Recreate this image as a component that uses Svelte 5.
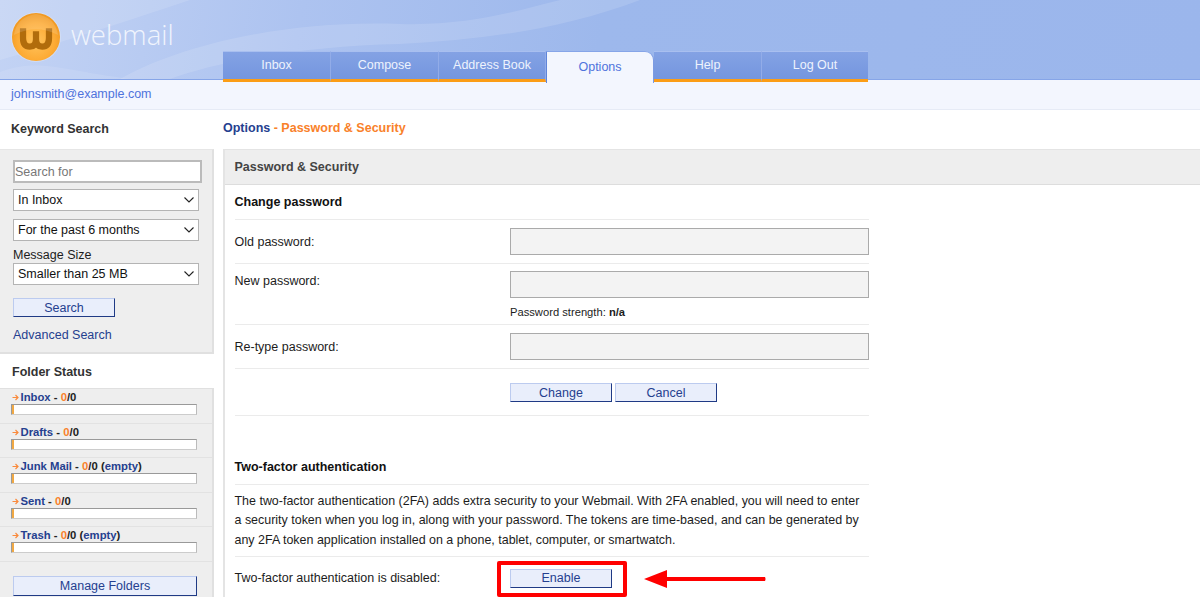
<script>
  const tabs = [
    { label: 'Inbox' },
    { label: 'Compose' },
    { label: 'Address Book' },
    { label: 'Options', active: true },
    { label: 'Help' },
    { label: 'Log Out' }
  ];

  const folders = [
    { name: 'Inbox' },
    { name: 'Drafts' },
    { name: 'Junk Mail', empty: true },
    { name: 'Sent' },
    { name: 'Trash', empty: true }
  ];
</script>

<div class="page">
  <header class="top">
    <svg class="swirl" viewBox="0 0 1200 79" preserveAspectRatio="none" aria-hidden="true">
      <path d="M0 60 C70 40 130 20 190 0 L0 0 Z" fill="#fff" opacity="0.12" />
      <path d="M120 79 C190 40 300 20 400 24 C470 26 520 10 560 0 L640 0 C560 30 480 40 400 44 C310 46 220 60 170 79 Z" fill="#fff" opacity="0.13" />
      <path d="M0 72 C40 58 60 70 130 79 L0 79 Z" fill="#fff" opacity="0.1" />
    </svg>
    <div class="logo">
      <svg class="badge" viewBox="0 0 52 52" aria-hidden="true">
        <defs>
          <radialGradient id="orb" cx="50%" cy="60%" r="55%">
            <stop offset="0%" stop-color="#ffc35c" />
            <stop offset="70%" stop-color="#fdab35" />
            <stop offset="100%" stop-color="#f19a23" />
          </radialGradient>
        </defs>
        <circle cx="26" cy="26" r="26" fill="#dfe8fa" opacity="0.5" />
        <circle cx="26" cy="26" r="25" fill="url(#orb)" />
        <path d="M12.5 17 V27 Q12.5 36 19.5 36 Q26 36 26 28 V20 V28 Q26 36 32.5 36 Q39.5 36 39.5 27 V17" fill="none" stroke="#b16c0c" stroke-width="6.5" />
        <path d="M3 24 Q26 12 49 24 Q46 5 26 2 Q6 5 3 24 Z" fill="#fff" opacity="0.14" />
      </svg>
      <span class="wordmark">webmail</span>
    </div>
    <nav class="tabs">
      {#each tabs as tab}
        <a class="tab" class:active={tab.active} href="#/">{tab.label}</a>
      {/each}
    </nav>
  </header>

  <div class="userbar"><a href="#/">johnsmith@example.com</a></div>

  <div class="columns">
    <aside class="side">
      <h2 class="side-title">Keyword Search</h2>
      <form class="search-panel">
        <input class="search-input" type="text" placeholder="Search for" />
        <select class="sel sel-a"><option>In Inbox</option></select>
        <select class="sel sel-b"><option>For the past 6 months</option></select>
        <label class="size-label" for="size">Message Size</label>
        <select class="sel" id="size"><option>Smaller than 25 MB</option></select>
        <button class="btn search-btn" type="button">Search</button>
        <a class="advanced" href="#/">Advanced Search</a>
      </form>

      <h2 class="side-title folder-title">Folder Status</h2>
      <div class="folder-panel">
        {#each folders as folder}
          <div class="folder">
            <div class="folder-line">
              <svg class="arrow-mini" viewBox="0 0 7 7" aria-hidden="true">
                <path d="M0.5 3.5 H5.5 M3.5 1 L6 3.5 L3.5 6" fill="none" stroke="#f98a3c" stroke-width="1.2" />
              </svg><a href="#/">{folder.name}</a> - <span class="count">0</span>/0{#if folder.empty}&nbsp;(<a href="#/">empty</a>){/if}
            </div>
            <div class="meter"><span class="meter-fill"></span></div>
          </div>
        {/each}
        <div class="manage"><button class="btn manage-btn" type="button">Manage Folders</button></div>
      </div>
    </aside>

    <main class="main">
      <div class="crumbs"><a href="#/">Options</a> <span>- Password &amp; Security</span></div>
      <section class="panel">
        <h1 class="panel-head">Password &amp; Security</h1>
        <div class="body">
          <h3 class="sec-head">Change password</h3>
          <div class="row row-old">
            <label for="old">Old password:</label>
            <input id="old" class="pw" type="password" />
          </div>
          <div class="row row-new">
            <label for="new">New password:</label>
            <div>
              <input id="new" class="pw" type="password" />
              <p class="strength">Password strength: <b>n/a</b></p>
            </div>
          </div>
          <div class="row row-retype">
            <label for="re">Re-type password:</label>
            <input id="re" class="pw" type="password" />
          </div>
          <div class="row row-actions">
            <span></span>
            <div class="actions">
              <button class="btn form-btn" type="button">Change</button>
              <button class="btn form-btn" type="button">Cancel</button>
            </div>
          </div>

          <h3 class="sec-head two-fa">Two-factor authentication</h3>
          <p class="blurb">The two-factor authentication (2FA) adds extra security to your Webmail. With 2FA enabled, you will need to enter a security token when you log in, along with your password. The tokens are time-based, and can be generated by any 2FA token application installed on a phone, tablet, computer, or smartwatch.</p>
          <div class="row row-enable">
            <span>Two-factor authentication is disabled:</span>
            <button class="btn form-btn" type="button">Enable</button>
            <div class="callout"></div>
            <svg class="callout-arrow" viewBox="0 0 124 20" aria-hidden="true">
              <path d="M1 10 L24 1 V8 H122 Q123 10 122 12 H24 V19 Z" fill="#f00" />
            </svg>
          </div>
        </div>
      </section>
    </main>
  </div>
</div>

<style>
  :global(html), :global(body) {
    margin: 0;
    height: 100%;
    overflow: hidden;
    background: #fff;
  }

  .page {
    font: 12.5px/15px "Liberation Sans", Arial, sans-serif;
    color: #1c1c1c;
    height: 597px;
    overflow: hidden;
  }

  a {
    color: #25408f;
    text-decoration: none;
  }

  h1, h2, h3, p {
    margin: 0;
  }

  /* header */
  .top {
    position: relative;
    box-sizing: border-box;
    height: 80px;
    display: flex;
    background: linear-gradient(100deg, #c3d3f4 0, #adc3f0 25%, #9db8ec 50%, #9bb6ec 100%);
    border-bottom: 1px solid #86a5e8;
  }

  .swirl {
    position: absolute;
    inset: 0;
    width: 100%;
    height: 100%;
  }

  .logo {
    position: relative;
    width: 223px;
    flex: none;
    display: flex;
    align-items: flex-start;
    padding: 12px 0 0 11px;
    box-sizing: border-box;
    gap: 10px;
  }

  .badge {
    width: 50px;
    height: 50px;
    flex: none;
  }

  .wordmark {
    font: 300 27.5px/1 "Open Sans", sans-serif;
    color: #f0f4fd;
    margin-top: 9px;
  }

  .tabs {
    position: relative;
    display: flex;
    margin-top: 51px;
    height: 31px;
  }

  .tab {
    box-sizing: border-box;
    width: 108px;
    height: 31px;
    padding-top: 6px;
    text-align: center;
    color: #eef3fd;
    background: linear-gradient(#84a2e4, #7496df);
    border-top: 1px solid #a9bfef;
    border-right: 1px solid #92ace8;
    border-bottom: 3px solid #fb9d16;
  }

  .tab:nth-child(3) {
    width: 107px;
  }

  .tab:nth-child(6) {
    border-right: 0;
    width: 106px;
  }

  .tab.active {
    width: 108px;
    padding-top: 8px;
    color: #4f73dc;
    background: #f3f6fe;
    border: 0;
    border-top: 1px solid #86a5e8;
    border-left: 1px solid #5f85d9;
    border-right: 1px solid #7c9be3;
    border-radius: 0 9px 0 0;
    height: 32px;
  }

  .userbar {
    box-sizing: border-box;
    height: 30px;
    padding: 7px 11px 0;
    background: #f3f6fe;
    border-bottom: 1px solid #e6ebf6;
  }

  .userbar a {
    color: #4f73dc;
  }

  /* columns */
  .columns {
    display: flex;
    align-items: flex-start;
  }

  .side {
    width: 214px;
    flex: none;
    margin-right: 9px;
  }

  .side-title {
    font-size: 12.5px;
    font-weight: bold;
    color: #333;
    padding: 12px 0 0 11px;
    height: 27px;
  }

  .search-panel {
    box-sizing: border-box;
    height: 205px;
    padding: 10px 0 0 13px;
    background: #eee;
    border-top: 1px solid #e6e6e6;
    border-right: 2px solid #e0e0e0;
    border-bottom: 2px solid #e0e0e0;
    display: flex;
    flex-direction: column;
    align-items: flex-start;
  }

  .search-input {
    box-sizing: border-box;
    width: 189px;
    height: 23px;
    margin: 0;
    padding: 0;
    font: 12.5px "Liberation Sans", Arial, sans-serif;
    border: 2px solid #bbb;
    background: #fff;
    border-radius: 0;
    outline: none;
  }

  .search-input::placeholder {
    color: #777;
    opacity: 1;
  }

  .sel {
    box-sizing: border-box;
    width: 186px;
    height: 22px;
    margin: 0;
    padding: 0 0 0 4px;
    font: 12.5px "Liberation Sans", Arial, sans-serif;
    color: #111;
    appearance: none;
    background: #fff url("data:image/svg+xml,%3Csvg xmlns='http://www.w3.org/2000/svg' width='10' height='6'%3E%3Cpath d='M.5.5l4.5 4.5 4.500-4.500' fill='none' stroke='%23222' stroke-width='1.100'/%3E%3C/svg%3E") no-repeat right 4px center;
    border: 1px solid #b4b4b4;
    border-radius: 0;
  }

  .sel-a {
    margin-top: 6px;
  }

  .sel-b {
    margin-top: 8px;
  }

  .size-label {
    margin-top: 7px;
    height: 15px;
  }

  .btn {
    box-sizing: border-box;
    margin: 0;
    padding: 0;
    font: 12.5px "Liberation Sans", Arial, sans-serif;
    color: #25408f;
    background: #e9eefb;
    border: 1px solid;
    border-color: #bccbef #1f3a85 #1f3a85 #bccbef;
    border-radius: 0;
  }

  .search-btn {
    width: 102px;
    height: 19px;
    margin-top: 13px;
  }

  .advanced {
    margin-top: 11px;
  }

  .folder-title {
    padding-left: 12px;
    padding-top: 11px;
    height: 23px;
  }

  .folder-panel {
    background: #eee;
    border-top: 1px solid #e0e0e0;
    border-right: 2px solid #e0e0e0;
    height: 230px;
  }

  .folder {
    box-sizing: border-box;
    height: 34.6px;
    padding: 1px 0 0 11px;
    border-bottom: 1px solid #e2e2e2;
  }

  .folder-line {
    font-size: 11.3px;
    font-weight: bold;
    line-height: 14px;
    color: #222;
    white-space: nowrap;
  }

  .arrow-mini {
    display: inline-block;
    width: 7px;
    height: 7px;
    margin: 0 1.500px 0 1px;
  }

  .count {
    color: #f9812a;
  }

  .meter {
    box-sizing: border-box;
    width: 186px;
    height: 11px;
    background: #fff;
    border: 1px solid;
    border-color: #999 #bbb #ccc #999;
    display: flex;
  }

  .meter-fill {
    width: 2px;
    background: #f0a844;
  }

  .manage {
    padding: 14.500px 0 0 13px;
  }

  .manage-btn {
    width: 184px;
    height: 20px;
  }

  /* main */
  .main {
    flex: 1;
    min-width: 0;
  }

  .crumbs {
    font-weight: bold;
    height: 39px;
    box-sizing: border-box;
    padding-top: 11px;
    color: #f9812a;
  }

  .crumbs span {
    color: #f9812a;
  }

  .panel {
    border-left: 2px solid #e4e4e4;
    border-top: 1px solid #e4e4e4;
  }

  .panel-head {
    box-sizing: border-box;
    height: 35px;
    padding: 10px 0 0 9.500px;
    font-size: 12.5px;
    font-weight: bold;
    color: #444;
    background: #eee;
    border-bottom: 1px solid #ddd;
  }

  .body {
    width: 634.500px;
    margin-left: 9.500px;
  }

  .sec-head {
    box-sizing: border-box;
    height: 35px;
    padding-top: 10px;
    font-size: 12.5px;
    font-weight: bold;
    color: #111;
    border-bottom: 1px solid #ebebeb;
  }

  .two-fa {
    height: 69px;
    padding-top: 44px;
  }

  .row {
    position: relative;
    box-sizing: border-box;
    display: grid;
    grid-template-columns: 275.500px 1fr;
    border-bottom: 1px solid #ebebeb;
  }

  .row-old {
    height: 44px;
    align-items: center;
  }

  .row-old label,
  .row-retype label {
    padding-top: 2px;
  }

  .row-new {
    height: 61px;
    padding-top: 7px;
  }

  .row-new label {
    padding-top: 3px;
  }

  .row-retype {
    height: 44px;
    align-items: center;
  }

  .row-actions {
    height: 47px;
    padding-top: 14px;
  }

  .pw {
    display: block;
    box-sizing: border-box;
    width: 359px;
    height: 27px;
    margin: 0;
    background: #f3f3f3;
    border: 1px solid #aaa;
    border-radius: 0;
  }

  .strength {
    margin-top: 8px;
    font-size: 11.2px;
    line-height: 13px;
  }

  .actions {
    display: flex;
    gap: 3px;
  }

  .form-btn {
    width: 102px;
    height: 19px;
  }

  .blurb {
    box-sizing: border-box;
    height: 72px;
    padding-top: 7px;
    font-size: 12.46px;
    line-height: 19.4px;
    border-bottom: 1px solid #ebebeb;
  }

  .row-enable {
    height: 42px;
    align-items: center;
    border-bottom: 0;
  }

  .row-enable .form-btn {
    justify-self: start;
  }

  .callout {
    position: absolute;
    left: 262px;
    top: 4px;
    width: 130px;
    height: 36px;
    box-sizing: border-box;
    border: 4.5px solid #f00;
    border-radius: 2px;
  }

  .callout-arrow {
    position: absolute;
    left: 408.500px;
    top: 12px;
    width: 124px;
    height: 20px;
  }
</style>
